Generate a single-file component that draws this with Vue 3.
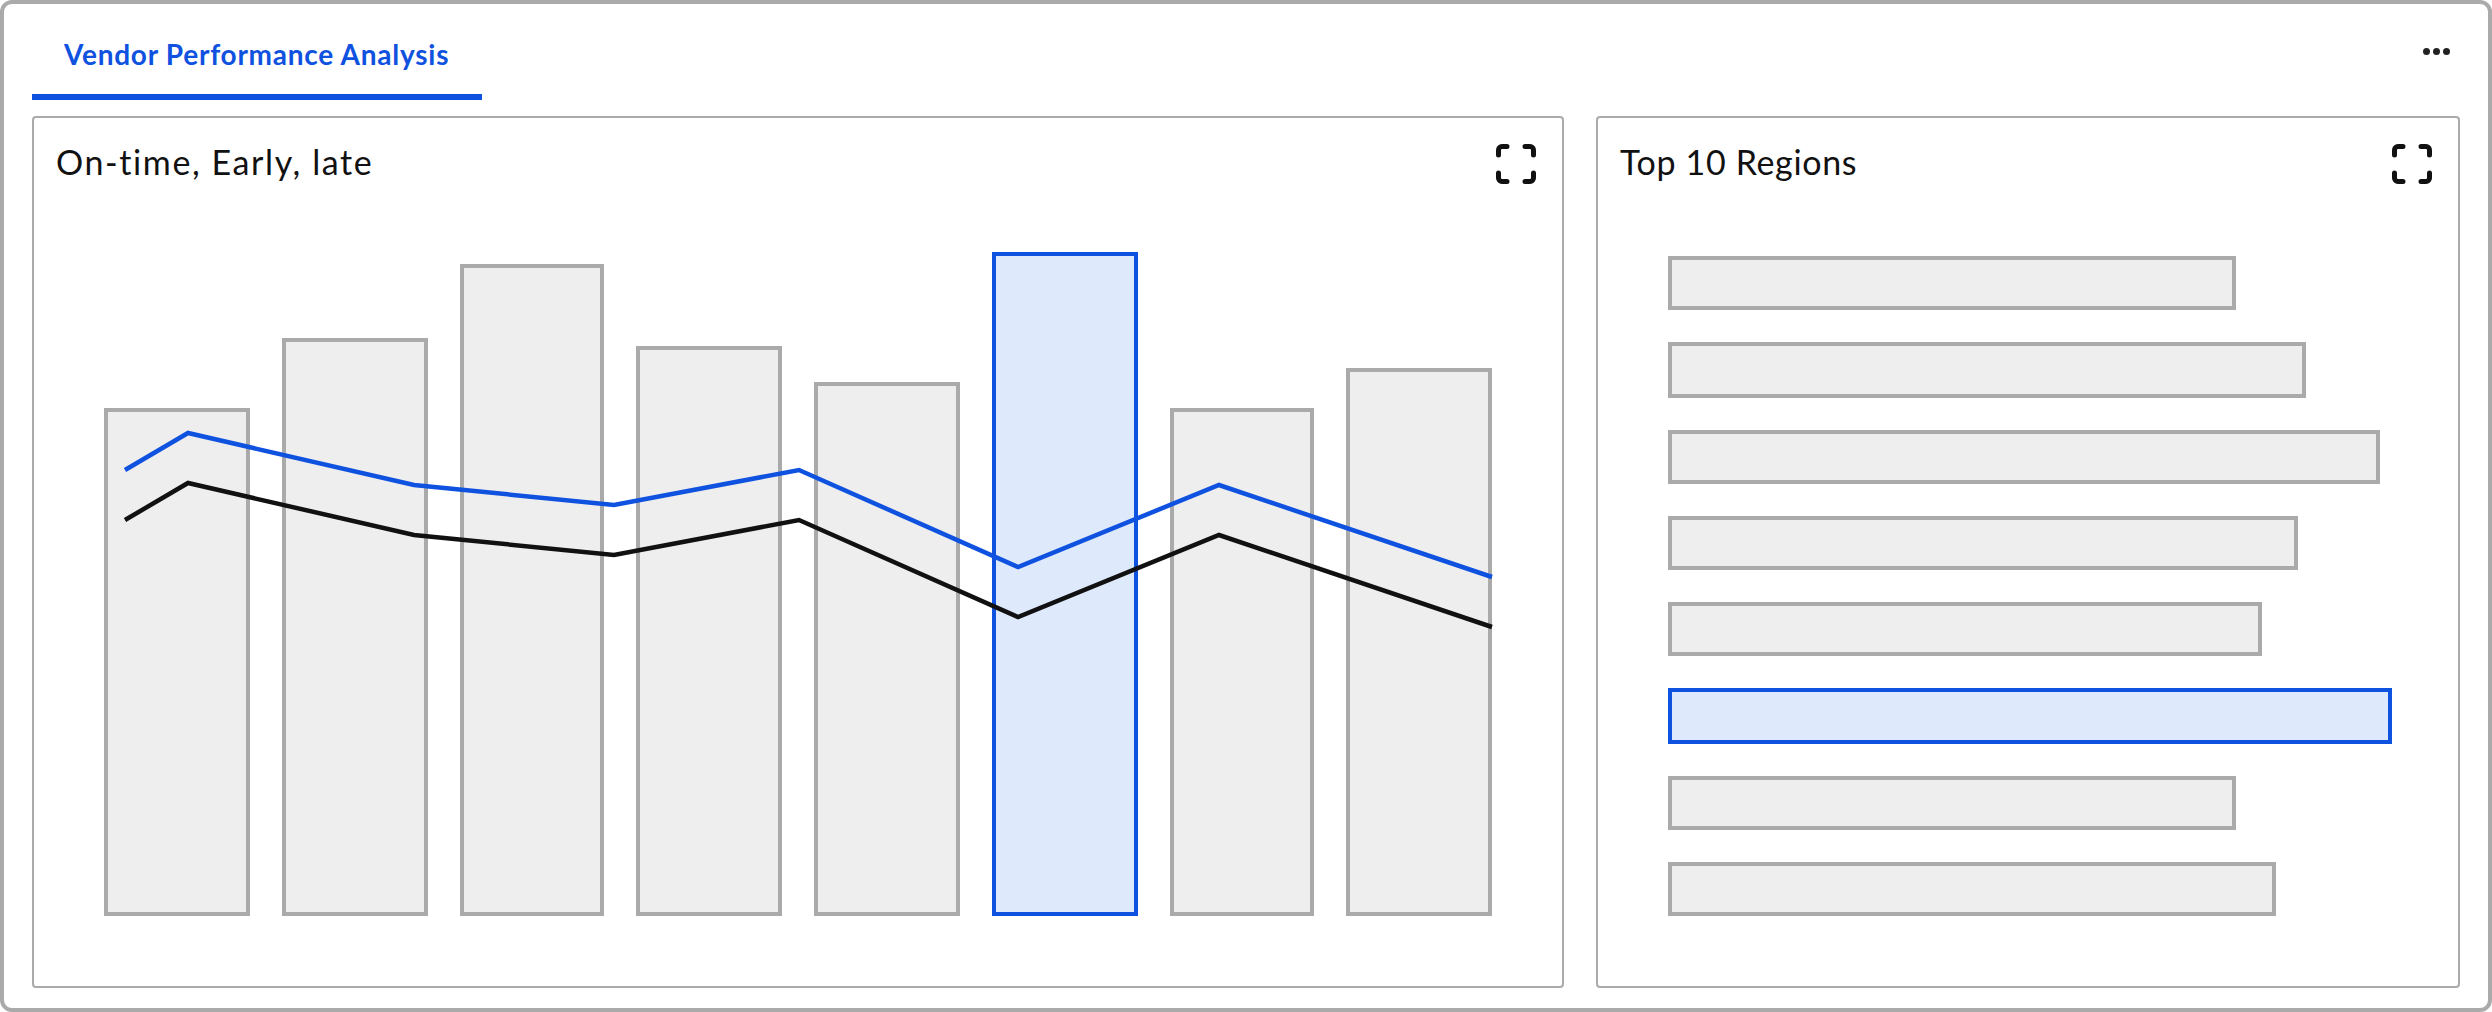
<template>
  <div class="page">
    <div class="tab-bar">
      <div class="tab">Vendor Performance Analysis</div>
      <div class="more"><span></span><span></span><span></span></div>
    </div>

    <div class="cards">
      <section class="card card-left">
        <header class="card-head">
          <h3 class="title-left">On-time, Early, late</h3>
          <svg class="expand" width="40" height="40" viewBox="0 0 40 40">
            <path d="M2.500 11V6a3.500 3.500 0 0 1 3.500-3.500h5M29 2.500h5a3.500 3.500 0 0 1 3.500 3.500v5M37.500 29v5a3.500 3.500 0 0 1-3.500 3.500h-5M11 37.500H6a3.500 3.500 0 0 1-3.500-3.500v-5" />
          </svg>
        </header>
        <div class="columns">
          <div
            v-for="(c, i) in columns"
            :key="i"
            class="column"
            :class="{ active: i === 5 }"
            :style="{ width: c.w + 'px', height: c.h + 'px' }"
          />
          <svg class="lines">
            <polyline class="line-blue" :points="bluePoints" />
            <polyline class="line-black" :points="blackPoints" />
          </svg>
        </div>
      </section>

      <section class="card card-right">
        <header class="card-head">
          <h3 class="title-right">Top 10 Regions</h3>
          <svg class="expand" width="40" height="40" viewBox="0 0 40 40">
            <path d="M2.500 11V6a3.500 3.500 0 0 1 3.500-3.500h5M29 2.500h5a3.500 3.500 0 0 1 3.500 3.500v5M37.500 29v5a3.500 3.500 0 0 1-3.500 3.500h-5M11 37.500H6a3.500 3.500 0 0 1-3.500-3.500v-5" />
          </svg>
        </header>
        <div class="rows">
          <div
            v-for="(r, i) in rows"
            :key="i"
            class="row"
            :class="{ active: i === 5 }"
            :style="{ width: r.w + 'px', height: r.h + 'px' }"
          />
        </div>
      </section>
    </div>
  </div>
</template>

<script setup>
const columns = [
  { w: 146, h: 508 },
  { w: 146, h: 578 },
  { w: 144, h: 652 },
  { w: 146, h: 570 },
  { w: 146, h: 534 },
  { w: 146, h: 664 },
  { w: 144, h: 508 },
  { w: 146, h: 548 }
]
const rows = [
  { w: 568, h: 54 },
  { w: 638, h: 56 },
  { w: 712, h: 54 },
  { w: 630, h: 54 },
  { w: 594, h: 54 },
  { w: 724, h: 56 },
  { w: 568, h: 54 },
  { w: 608, h: 54 }
]

const line = [[21, 218], [84, 181], [310, 233], [510, 253], [695, 218], [914, 315], [1115, 233], [1388, 325]]
const bluePoints = line.map(p => p.join(',')).join(' ')
// the black line runs 50px under the blue one
const blackPoints = line.map(p => `${p[0]},${p[1] + 50}`).join(' ')
</script>

<style>
body { background: #fff; }
</style>

<style scoped>
.page {
  width: 2492px;
  height: 1012px;
  box-sizing: border-box;
  border: 4px solid #aaa;
  border-radius: 12px;
  padding: 0 28px 20px;
  display: flex;
  flex-direction: column;
  background: #fff;
  font-family: "Lato", "Open Sans", sans-serif;
  color: #111;
}
.tab-bar {
  height: 96px;
  flex: none;
  display: flex;
  justify-content: space-between;
  align-items: flex-start;
}
.tab {
  width: 450px;
  height: 96px;
  box-sizing: border-box;
  border-bottom: 6px solid #0f52e0;
  padding: 33px 0 0 32px;
  font-size: 28px;
  line-height: 34px;
  font-weight: 700;
  letter-spacing: 0.75px;
  color: #0f52e0;
  white-space: nowrap;
}
.more {
  display: flex;
  gap: 3px;
  margin-top: 44px;
  margin-right: 10px;
}
.more span {
  width: 7px;
  height: 7px;
  border-radius: 50%;
  background: #222;
}
.cards {
  flex: 1;
  display: flex;
  gap: 32px;
  margin-top: 16px;
  min-height: 0;
}
.card {
  box-sizing: border-box;
  border: 2px solid #aaa;
  border-radius: 4px;
  display: flex;
  flex-direction: column;
  background: #fff;
}
.card-left { width: 1532px; }
.card-right { width: 864px; }
.card-head {
  height: 134px;
  flex: none;
  display: flex;
  justify-content: space-between;
  align-items: flex-start;
  padding: 26px 26px 0 22px;
  box-sizing: border-box;
}
h3 {
  margin: -4px 0 0;
  font-size: 34px;
  line-height: 44px;
  font-weight: 400;
  white-space: nowrap;
}
.title-left { letter-spacing: 1.6px; }
.title-right { letter-spacing: 0.65px; }
.expand { fill: none; stroke: #111; stroke-width: 5; stroke-linecap: round; }
.columns {
  flex: 1;
  position: relative;
  display: flex;
  align-items: flex-end;
  gap: 32px;
  margin: 0 70px 70px;
}
.column {
  flex: none;
  box-sizing: border-box;
  border: 4px solid #aaa;
  background: #eee;
}
.column.active, .row.active {
  border-color: #0f52e0;
  background: #dee9fc;
}
.lines {
  position: absolute;
  left: 0;
  top: 0;
  width: 100%;
  height: 100%;
  overflow: visible;
}
.lines polyline { fill: none; stroke-width: 4.5; }
.line-blue { stroke: #0f52e0; }
.line-black { stroke: #111; }
.rows {
  flex: 1;
  display: flex;
  flex-direction: column;
  gap: 32px;
  margin: 4px 0 70px 70px;
}
.row {
  flex: none;
  box-sizing: border-box;
  border: 4px solid #aaa;
  background: #eee;
}
</style>
